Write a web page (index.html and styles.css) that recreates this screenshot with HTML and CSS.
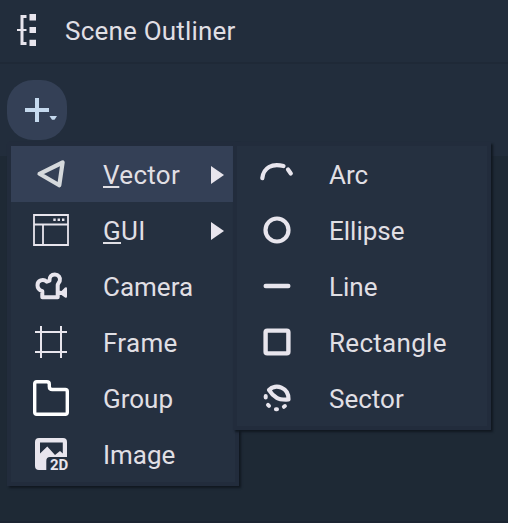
FILE: index.html
```html
<!DOCTYPE html>
<html lang="en">
<head>
<meta charset="utf-8">
<title>Scene Outliner</title>
<link rel="stylesheet" href="styles.css">
</head>
<body>
<header class="header">
  <svg class="logo" width="20" height="34" viewBox="0 0 20 34"><path class="line square" stroke-width="3" d="M9.500 3.500H5V30.500H9.500"/><path class="line square" stroke-width="2" d="M0 17H9.500"/><path class="solid" d="M12.500 1h6.500v6.500h-6.500zM12.500 14h6.500v6h-6.500zM12.500 26.700h6.500v6.300h-6.500z"/></svg>
  <h1 class="title">Scene Outliner</h1>
</header>
<div class="toolbar">
  <button class="add" aria-label="Add"><svg width="60" height="60"><path class="plus" d="M18 30H42M30 18V42"/><path class="drop" d="M42.500 36h7.500l-2.500 3.700h-2.500z"/></svg></button>
</div>
<nav class="menu main-menu">
  <div class="item active"><svg class="icon" viewBox="0 0 40 40"><path class="line vector" stroke-width="4.200" d="M8.500 19.800L31.600 8.500L28.300 31.300Z"/></svg><span class="label wide"><u>V</u>ector</span><svg class="arrow" viewBox="0 0 13 18"><path class="solid" d="M0 0L13 9L0 18Z"/></svg></div>
  <div class="item"><svg class="icon" viewBox="0 0 40 40"><path class="line square" stroke-width="1.800" d="M3 5H37V35H3ZM3 14.500H37M12 14.500V35"/><path class="solid" d="M22.300 8.500h2.400v2.400h-2.400zM26.600 8.500h2.400v2.400h-2.400zM31 8.500h2.400v2.400h-2.400z"/></svg><span class="label wide"><u>G</u>UI</span><svg class="arrow" viewBox="0 0 13 18"><path class="solid" d="M0 0L13 9L0 18Z"/></svg></div>
  <div class="item"><svg class="icon" viewBox="0 0 40 40"><path class="line" stroke-width="4" d="M11.300 31.300V25.200C8 24 6.500 21.800 6.500 19.200C6.500 14.500 12 12.500 15.800 15.700L18.500 14.700C18.300 10.500 20.500 8.500 23.800 8.500C27.500 8.500 29.700 11.500 28.800 14.800C28.400 16.500 26.700 17.500 26.700 19.500V31.300Z"/><path class="solid" d="M27 24.500L30.500 25L34 21.500Q36 20.500 36 22.500V30.500Q36 32.500 34 31.500L30.500 29H27Z"/></svg><span class="label">Camera</span></div>
  <div class="item"><svg class="icon" viewBox="0 0 40 40"><path class="line square" stroke-width="2" d="M4 10H36M4 30H36M10 4V36M30 4V36"/></svg><span class="label wide">Frame</span></div>
  <div class="item"><svg class="icon" viewBox="0 0 40 40"><path class="line white" stroke-width="3.400" d="M5.700 3.700H15.800Q18.300 3.700 18.300 6.200V8.500Q18.300 11.500 21.300 11.500H34.300Q36.300 11.500 36.300 13.500V34.300Q36.300 36.300 34.300 36.300H5.700Q3.700 36.300 3.700 34.300V5.700Q3.700 3.700 5.700 3.700Z"/></svg><span class="label">Group</span></div>
  <div class="item"><svg class="icon" viewBox="0 0 40 40"><path class="solid" fill-rule="evenodd" d="M8 4H32Q36 4 36 8V23H19Q15.300 23 15.300 27V36H8Q4 36 4 32V8Q4 4 8 4ZM9 8.500V19.500L16.300 12.600L24 21L29 17L31.800 19.500V8.500Z"/><text class="badge" x="19" y="35.500" textLength="18.300" lengthAdjust="spacingAndGlyphs">2D</text></svg><span class="label">Image</span></div>
</nav>
<nav class="menu sub-menu">
  <div class="item"><svg class="icon" viewBox="0 0 40 40"><path class="line" stroke-width="4.200" d="M5.300 24.200C6.500 13.500 15 9 26.500 12M31 15.500L33.800 19.500"/></svg><span class="label">Arc</span></div>
  <div class="item"><svg class="icon" viewBox="0 0 40 40"><circle class="line" stroke-width="4.200" cx="20" cy="20" r="11.500"/></svg><span class="label">Ellipse</span></div>
  <div class="item"><svg class="icon" viewBox="0 0 40 40"><path class="line" stroke-width="4.400" d="M8.700 20H31.300"/></svg><span class="label">Line</span></div>
  <div class="item"><svg class="icon" viewBox="0 0 40 40"><rect class="line" stroke-width="4.400" x="8.600" y="8.600" width="22.800" height="22.800" rx="1.600"/></svg><span class="label wide">Rectangle</span></div>
  <div class="item"><svg class="icon" viewBox="0 0 40 40"><path class="line" stroke-width="4.200" d="M12 12C18.500 5 32 9.500 31.500 21.500C26 21.700 22 21.300 20 20C16.500 17.700 14 15.500 12 12Z"/><path class="line" stroke-width="4" d="M8.700 18V19.400M11 26.800L12 27.800M18.900 31.300H20M26.900 28.800L27.900 28"/></svg><span class="label">Sector</span></div>
</nav>
</body>
</html>
```
FILE: styles.css
```css
* { box-sizing: border-box; }
body {
  margin: 0;
  height: 523px;
  overflow: hidden;
  background: #1e2935;
  border-bottom: 2px solid #1b2431;
  color: #e0dfe4;
  font: 26px/56px Roboto, sans-serif;
}
.header {
  display: flex;
  align-items: flex-start;
  height: 64px;
  padding: 2px 0 0 17px;
  background: #222d3c;
  border-bottom: 2px solid #1f2937;
}
.logo { margin-top: 11px; }
.title { margin: 0 0 0 28px; font-size: 26px; font-weight: 400; line-height: 58px; letter-spacing: 0.2px; }
.toolbar { height: 92px; padding: 16px 7px; background: #222d3c; }
.add {
  display: block;
  width: 60px;
  height: 60px;
  padding: 0;
  border: 0;
  border-radius: 26px;
  background: #344056;
}
.add svg { display: block; }
.plus { stroke: #c5d9ee; stroke-width: 4; fill: none; }
.drop { fill: #c5d9ee; }
.menu {
  position: absolute;
  top: 142px;
  border: 4px solid #222c3c;
  background: #253040;
  box-shadow: 2px 2px 2px #111821;
}
.main-menu { left: 7px; width: 232px; }
.sub-menu { left: 233px; width: 258px; }
.item { display: flex; align-items: center; height: 56px; padding-left: 20px; }
.active { background: #344056; }
.icon { width: 40px; height: 40px; flex: none; }
.label { margin-left: 32px; padding-top: 2px; }
.wide { letter-spacing: 0.3px; }
.label u {
  text-decoration: underline;
  text-decoration-thickness: 2px;
  text-underline-offset: 2px;
}
.arrow { width: 13px; height: 18px; margin: 2px 11px 0 auto; }
.line { fill: none; stroke: #e8e5ed; stroke-linecap: round; stroke-linejoin: round; }
.square { stroke-linecap: butt; stroke-linejoin: miter; }
.vector { stroke: #d5d9dc; }
.white { stroke: #fff; }
.solid { fill: #e8e5ed; }
.badge { fill: #e8e5ed; font: 700 14px Roboto, sans-serif; }
```
